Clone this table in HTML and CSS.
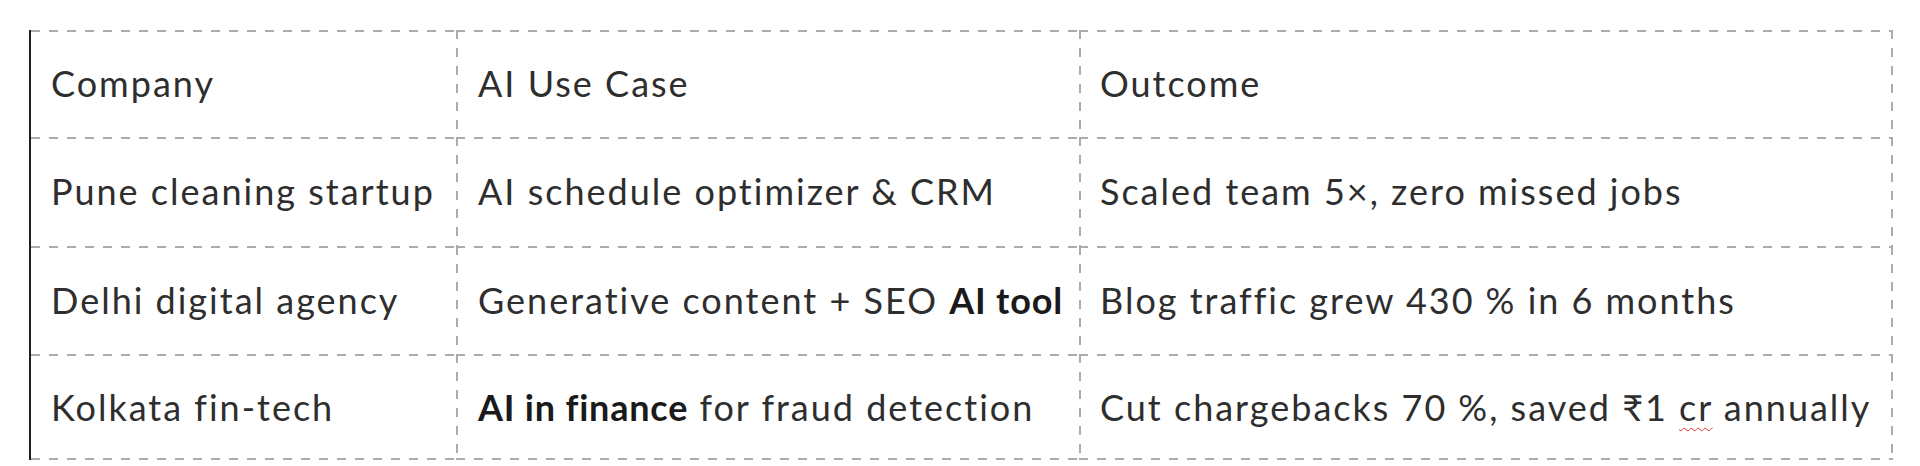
FILE: index.html
```html
<!DOCTYPE html>
<html lang="en">
<head>
<meta charset="utf-8">
<title>AI case studies</title>
<link rel="stylesheet" href="styles.css">
</head>
<body>
<div class="wrap">
  <div class="table" role="table">
    <div class="cell col1" role="columnheader"><span class="txt">Company</span></div>
    <div class="cell col2" role="columnheader"><span class="txt">AI Use Case</span></div>
    <div class="cell col3" role="columnheader"><span class="txt">Outcome</span></div>

    <div class="cell col1" role="cell"><span class="txt">Pune cleaning startup</span></div>
    <div class="cell col2" role="cell"><span class="txt">AI schedule optimizer &amp; CRM</span></div>
    <div class="cell col3" role="cell"><span class="txt">Scaled team 5×, zero missed jobs</span></div>

    <div class="cell col1" role="cell"><span class="txt">Delhi digital agency</span></div>
    <div class="cell col2" role="cell"><span class="txt">Generative content + SEO <strong>AI tool</strong></span></div>
    <div class="cell col3" role="cell"><span class="txt">Blog traffic grew 430&#8239;% in 6&#8239;months</span></div>

    <div class="cell col1 last" role="cell"><span class="txt">Kolkata fin-tech</span></div>
    <div class="cell col2 last" role="cell"><span class="txt"><strong>AI in finance</strong> for fraud detection</span></div>
    <div class="cell col3 last" role="cell"><span class="txt">Cut chargebacks 70&#8239;%, saved ₹1 <span class="typo">cr</span> annually</span></div>
  </div>
</div>
</body>
</html>
```

FILE: styles.css
```css
html, body {
  margin: 0;
  padding: 0;
  background: #ffffff;
}

body {
  font-family: Lato, "Open Sans", "DejaVu Sans", sans-serif;
  color: #2e2e2e;
}

.wrap {
  padding: 30px 0 0 29px;
}

.table {
  --dash: #ababab;
  display: grid;
  grid-template-columns: 425px 623px 814px;
  grid-template-rows: 106.5px 109px 108px 106.5px;
  width: max-content;
  border-left: 2px solid #1f1f1f;
}

.cell {
  --t: var(--dash);
  --b: transparent;
  --l: var(--dash);
  --r: transparent;
  display: flex;
  align-items: center;
  padding: 0 10px 0 22px;
  font-size: 36px;
  letter-spacing: 2px;
  white-space: nowrap;
  background:
    repeating-linear-gradient(to right, var(--t) 0 9px, transparent 9px 18px) left top / 100% 2px no-repeat,
    repeating-linear-gradient(to right, var(--b) 0 9px, transparent 9px 18px) left bottom / 100% 2px no-repeat,
    repeating-linear-gradient(to bottom, var(--l) 0 9px, transparent 9px 18px) left top / 2px 100% no-repeat,
    repeating-linear-gradient(to bottom, var(--r) 0 9px, transparent 9px 18px) right top / 2px 100% no-repeat;
}

.col1 {
  --l: transparent;
  padding-left: 20px;
}

.col3 {
  --r: var(--dash);
  padding-left: 21px;
}

.last {
  --b: var(--dash);
}

.txt {
  display: block;
}

strong {
  font-weight: 700;
  letter-spacing: 0.8px;
  color: #1a1a1a;
}

.typo {
  text-decoration: underline wavy #e0302a;
  text-decoration-thickness: 1px;
  text-underline-offset: 6px;
}
```
